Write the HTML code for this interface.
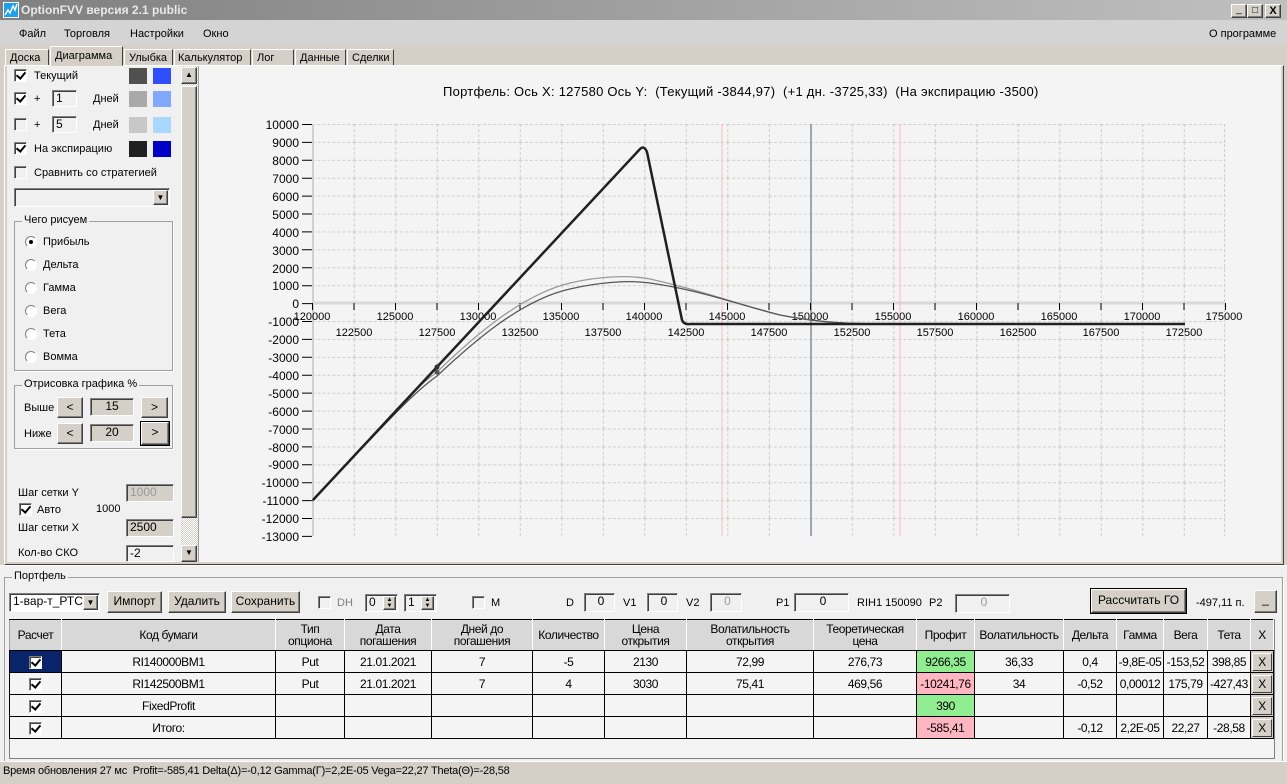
<!DOCTYPE html>
<html><head><meta charset="utf-8"><style>
*{box-sizing:border-box;margin:0;padding:0}
body{width:1287px;height:784px;overflow:hidden;background:#d4d0c8;font-family:"Liberation Sans",sans-serif;font-size:11px;color:#000;position:relative}
.a{position:absolute;white-space:nowrap}
.cb{position:absolute;width:13px;height:13px;background:#fff;border:1px solid;border-color:#808080 #fff #fff #808080;box-shadow:inset 1px 1px 0 #404040}
.cb.on::after{content:"";position:absolute;left:3px;top:0px;width:4px;height:7px;border:solid #000;border-width:0 2px 2px 0;transform:rotate(40deg)}
.cb.g{background:#f0f0f0}
.sunk{position:absolute;background:#f0f0f0;border:1px solid;border-color:#808080 #fff #fff #808080;box-shadow:inset 1px 1px 0 #404040;padding-left:3px;font-size:12px;line-height:15px}
.btn{position:absolute;background:#d4d0c8;border:1px solid;border-color:#fff #404040 #404040 #fff;box-shadow:inset -1px -1px 0 #808080;text-align:center;font-size:12px}
.sw{position:absolute;width:18px;height:16px}
.rad{position:absolute;width:12px;height:12px;border-radius:50%;background:#fff;border:1px solid;border-color:#808080 #fff #fff #808080}
.grp{position:absolute;border:1px solid #a0a0a0;box-shadow:1px 1px 0 #fff}
.grp>span{position:absolute;top:-8px;left:7px;background:#f0f0f0;padding:0 2px;font-size:11px}
.tab{position:absolute;top:49px;height:17px;background:#d4d0c8;border:1px solid;border-color:#fff #404040 transparent #fff;font-size:11px;padding:2px 4px 0}
table{border-collapse:collapse;position:absolute;left:9px;top:619px;table-layout:fixed;font-size:12px;letter-spacing:-0.4px}
td{border:1px solid #000;text-align:center;height:22px;padding:0;background:#f4f4f4;white-space:nowrap;overflow:hidden}
tr.h td{height:31px;background:#d8d8d8;border-color:#000 #fff #000 #a0a0a0;line-height:12px;font-size:12px}
.x{background:#d4d0c8!important;border-color:#000 #000 #000 #000}
.x div{margin:1px;border:1px solid;border-color:#fff #404040 #404040 #fff;height:18px;line-height:16px}
</style></head><body>
<!-- title bar -->
<div class="a" style="left:0;top:0;width:1287px;height:20px;background:linear-gradient(90deg,#808080,#c0c0c0)"></div>
<div class="a" style="left:3px;top:2px;width:16px;height:16px;background:#1b9ff0;border:1px solid #fff"></div>
<svg class="a" style="left:3px;top:2px" width="16" height="16"><path d="M2 13 L5 8 L7 11 L10 4 L12 8 L14 2" stroke="#fff" stroke-width="1.5" fill="none"/></svg>
<div class="a" style="left:21px;top:3px;color:#e8e8e8;font-weight:bold;font-size:12px">OptionFVV версия 2.1 public</div>
<div class="btn" style="left:1231px;top:4px;width:16px;height:14px;font-size:10px;line-height:10px">_</div>
<div class="btn" style="left:1247px;top:4px;width:16px;height:14px;font-size:10px;line-height:11px">□</div>
<div class="btn" style="left:1265px;top:4px;width:16px;height:14px;font-size:11px;line-height:12px;font-weight:bold">X</div>
<!-- menu -->
<div class="a" style="left:0;top:20px;width:1287px;height:25px;background:#d4d4d4"></div>
<div class="a" style="left:19px;top:28px">Файл</div>
<div class="a" style="left:64px;top:28px">Торговля</div>
<div class="a" style="left:130px;top:28px">Настройки</div>
<div class="a" style="left:203px;top:28px">Окно</div>
<div class="a" style="left:1209px;top:28px">О программе</div>
<!-- tabs -->
<div class="tab" style="left:5px;width:44px">Доска</div>
<div class="tab" style="left:50px;top:46px;height:20px;width:73px;z-index:2;padding-top:3px">Диаграмма</div>
<div class="tab" style="left:124px;width:49px">Улыбка</div>
<div class="tab" style="left:174px;width:77px;padding-left:3px">Калькулятор</div>
<div class="tab" style="left:252px;width:42px">Лог</div>
<div class="tab" style="left:295px;width:51px">Данные</div>
<div class="tab" style="left:347px;width:47px">Сделки</div>
<!-- main panel -->
<div class="a" style="left:4px;top:65px;width:1280px;height:500px;border:1px solid;border-color:#fff #404040 #404040 #fff;background:#d4d0c8"></div>
<div class="a" style="left:7px;top:66px;width:174px;height:496px;background:#f0f0f0"></div>
<div class="a" style="left:198px;top:66px;width:1083px;height:496px;background:#f4f4f4;border-left:1px solid #a0a0a0"></div>
<!-- left panel -->
<div class="cb on" style="left:14px;top:69px"></div><div class="a" style="left:34px;top:70px">Текущий</div>
<div class="sw" style="left:129px;top:68px;background:#505050"></div><div class="sw" style="left:153px;top:68px;background:#2d4fff"></div>
<div class="cb on" style="left:14px;top:92px"></div><div class="a" style="left:34px;top:93px">+</div>
<div class="sunk" style="left:52px;top:90px;width:25px;height:17px">1</div><div class="a" style="left:93px;top:93px">Дней</div>
<div class="sw" style="left:129px;top:91px;background:#a9a9a9"></div><div class="sw" style="left:153px;top:91px;background:#80a8ff"></div>
<div class="cb g" style="left:14px;top:118px"></div><div class="a" style="left:34px;top:119px">+</div>
<div class="sunk" style="left:52px;top:116px;width:25px;height:17px">5</div><div class="a" style="left:93px;top:119px">Дней</div>
<div class="sw" style="left:129px;top:117px;background:#c8c8c8"></div><div class="sw" style="left:153px;top:117px;background:#a8d8ff"></div>
<div class="cb on" style="left:14px;top:142px"></div><div class="a" style="left:34px;top:143px">На экспирацию</div>
<div class="sw" style="left:129px;top:141px;background:#202020"></div><div class="sw" style="left:153px;top:141px;background:#0000c8"></div>
<div class="cb g" style="left:14px;top:166px"></div><div class="a" style="left:34px;top:167px">Сравнить со стратегией</div>
<div class="sunk" style="left:14px;top:188px;width:156px;height:19px"></div>
<div class="btn" style="left:153px;top:190px;width:15px;height:15px;font-size:8px;line-height:13px">▼</div>
<div class="grp" style="left:14px;top:221px;width:159px;height:150px"><span>Чего рисуем</span></div>
<div class="rad" style="left:25px;top:236px"><div style="position:absolute;left:3px;top:3px;width:4px;height:4px;background:#000;border-radius:50%"></div></div><div class="a" style="left:43px;top:236px">Прибыль</div>
<div class="rad" style="left:25px;top:259px"></div><div class="a" style="left:43px;top:259px">Дельта</div>
<div class="rad" style="left:25px;top:282px"></div><div class="a" style="left:43px;top:282px">Гамма</div>
<div class="rad" style="left:25px;top:305px"></div><div class="a" style="left:43px;top:305px">Вега</div>
<div class="rad" style="left:25px;top:328px"></div><div class="a" style="left:43px;top:328px">Тета</div>
<div class="rad" style="left:25px;top:351px"></div><div class="a" style="left:43px;top:351px">Вомма</div>
<div class="grp" style="left:14px;top:385px;width:159px;height:64px"><span>Отрисовка графика %</span></div>
<div class="a" style="left:24px;top:402px">Выше</div>
<div class="btn" style="left:57px;top:397px;width:26px;height:21px;line-height:18px">&lt;</div>
<div class="sunk" style="left:90px;top:398px;width:44px;height:18px;background:#d4d0c8;text-align:center;padding:0">15</div>
<div class="btn" style="left:141px;top:397px;width:27px;height:21px;line-height:18px">&gt;</div>
<div class="a" style="left:24px;top:428px">Ниже</div>
<div class="btn" style="left:57px;top:423px;width:26px;height:21px;line-height:18px">&lt;</div>
<div class="sunk" style="left:90px;top:424px;width:44px;height:18px;background:#d4d0c8;text-align:center;padding:0">20</div>
<div class="btn" style="left:141px;top:422px;width:28px;height:23px;line-height:19px;outline:1px solid #000">&gt;</div>
<div class="a" style="left:18px;top:487px">Шаг сетки Y</div>
<div class="sunk" style="left:126px;top:484px;width:48px;height:18px;background:#d4d0c8;color:#999">1000</div>
<div class="cb on" style="left:19px;top:503px"></div><div class="a" style="left:37px;top:504px">Авто</div><div class="a" style="left:96px;top:503px">1000</div>
<div class="a" style="left:18px;top:522px">Шаг сетки X</div>
<div class="sunk" style="left:126px;top:519px;width:48px;height:18px;background:#d4d0c8">2500</div>
<div class="a" style="left:18px;top:547px">Кол-во СКО</div>
<div class="sunk" style="left:126px;top:545px;width:48px;height:17px">-2</div>
<!-- scrollbar -->
<div class="a" style="left:181px;top:66px;width:17px;height:496px;background:repeating-conic-gradient(#fff 0 25%,#d4d0c8 0 50%) 0 0/2px 2px"></div>
<div class="btn" style="left:181px;top:67px;width:16px;height:17px;font-size:8px;line-height:14px">▲</div>
<div class="btn" style="left:181px;top:86px;width:16px;height:432px"></div>
<div class="btn" style="left:181px;top:545px;width:16px;height:17px;font-size:8px;line-height:14px">▼</div>
<!-- chart -->
<div class="a" style="left:443px;top:84px;font-size:13px;letter-spacing:0.25px">Портфель: Ось X: 127580 Ось Y: &nbsp;(Текущий -3844,97) &nbsp;(+1 дн. -3725,33) &nbsp;(На экспирацию -3500)</div>
<svg class="a" style="left:0;top:0" width="1287" height="565">
<defs><pattern id="g" patternUnits="userSpaceOnUse" x="312.3" y="124" width="41.5" height="17.913"><path d="M0.5 0V17.913M0 0.5H41.5" stroke="#cfcfcf" stroke-width="1" stroke-dasharray="3 2" fill="none"/></pattern></defs>
<rect x="312.3" y="124" width="913" height="412" fill="url(#g)"/>
<line x1="1224.5" y1="124" x2="1224.5" y2="536" stroke="#cfcfcf" stroke-dasharray="3 2"/>
<line x1="313" y1="124" x2="313" y2="536" stroke="#d0d0d0" stroke-width="2"/>
<line x1="312" y1="303" x2="1225" y2="303" stroke="#d8d8d8" stroke-width="3"/>
<line x1="722" y1="124" x2="722" y2="536" stroke="#ffb8c0"/>
<line x1="900" y1="124" x2="900" y2="536" stroke="#ffb8c0"/>
<line x1="811" y1="124" x2="811" y2="536" stroke="#a0a4ac" stroke-width="2"/>
<g stroke="#000"><path d="M302 124.5h10M302 142.4h10M302 160.3h10M302 178.2h10M302 196.1h10M302 214h10M302 231.9h10M302 249.8h10M302 267.8h10M302 285.7h10M302 303.6h10M302 321.5h10M302 339.4h10M302 357.3h10M302 375.2h10M302 393.1h10M302 411.1h10M302 429h10M302 446.9h10M302 464.8h10M302 482.7h10M302 500.6h10M302 518.5h10M302 536.4h10"/>
<path d="M312.5 303v7M354 303v7M395.5 303v7M437 303v7M478.5 303v7M520 303v7M561.5 303v7M603 303v7M644.5 303v7M686 303v7M727.5 303v7M769 303v7M810.5 303v7M852 303v7M893.5 303v7M935 303v7M976.5 303v7M1018 303v7M1059.5 303v7M1101 303v7M1142.5 303v7M1184 303v7M1225.5 303v7"/></g>
<g font-family="Liberation Sans" font-size="12" text-anchor="end">
<text x="299" y="129">10000</text><text x="299" y="147">9000</text><text x="299" y="165">8000</text><text x="299" y="183">7000</text><text x="299" y="201">6000</text><text x="299" y="219">5000</text><text x="299" y="237">4000</text><text x="299" y="255">3000</text><text x="299" y="273">2000</text><text x="299" y="290">1000</text><text x="299" y="308">0</text><text x="299" y="326">-1000</text><text x="299" y="344">-2000</text><text x="299" y="362">-3000</text><text x="299" y="380">-4000</text><text x="299" y="398">-5000</text><text x="299" y="416">-6000</text><text x="299" y="434">-7000</text><text x="299" y="452">-8000</text><text x="299" y="469">-9000</text><text x="299" y="487">-10000</text><text x="299" y="505">-11000</text><text x="299" y="523">-12000</text><text x="299" y="541">-13000</text></g>
<g font-family="Liberation Sans" font-size="11" text-anchor="middle">
<text x="312" y="320">120000</text><text x="395" y="320">125000</text><text x="478" y="320">130000</text><text x="561" y="320">135000</text><text x="644" y="320">140000</text><text x="727" y="320">145000</text><text x="810" y="320">150000</text><text x="893" y="320">155000</text><text x="976" y="320">160000</text><text x="1059" y="320">165000</text><text x="1142" y="320">170000</text><text x="1224" y="320">175000</text>
<text x="354" y="336">122500</text><text x="437" y="336">127500</text><text x="520" y="336">132500</text><text x="603" y="336">137500</text><text x="686" y="336">142500</text><text x="769" y="336">147500</text><text x="852" y="336">152500</text><text x="935" y="336">157500</text><text x="1018" y="336">162500</text><text x="1101" y="336">167500</text><text x="1184" y="336">172500</text></g>
<path d="M312 501 C380 430 405 395 437 372 C470 340 520 295 570 283 C600 276 630 275 650 279 C700 290 740 305 780 315 C820 323 850 324 900 324" stroke="#999" stroke-width="1.3" fill="none"/>
<path d="M312 501 C380 430 410 395 437 376 C470 345 520 300 570 289 C600 282 630 280 650 283 C700 290 740 305 780 315 C820 323 850 324 900 324" stroke="#555" stroke-width="1.3" fill="none"/>
<path d="M313 500 L640 149 Q644 145 647 152 L682 320 Q684 325 690 324 L1185 324" stroke="#202020" stroke-width="2.5" fill="none" stroke-linejoin="round"/>
<circle cx="437" cy="367" r="2.5" fill="#333"/><circle cx="437" cy="372" r="2.5" fill="#555"/>
</svg>
<!-- bottom area -->
<div class="a" style="left:0;top:565px;width:1287px;height:196px;background:#f0f0f0;border-top:1px solid #fff"></div>
<div class="grp" style="left:4px;top:577px;width:1279px;height:190px;border-bottom:none"><span>Портфель</span></div>
<div class="sunk" style="left:9px;top:593px;width:91px;height:19px;background:#fff;font-size:12px">1-вар-т_РТС</div>
<div class="btn" style="left:83px;top:595px;width:15px;height:15px;font-size:8px;line-height:13px">▼</div>
<div class="btn" style="left:107px;top:591px;width:55px;height:22px;line-height:19px">Импорт</div>
<div class="btn" style="left:168px;top:591px;width:58px;height:22px;line-height:19px">Удалить</div>
<div class="btn" style="left:231px;top:591px;width:69px;height:22px;line-height:19px">Сохранить</div>
<div class="cb g" style="left:318px;top:596px"></div><div class="a" style="left:337px;top:597px;color:#808080">DH</div>
<div class="sunk" style="left:365px;top:594px;width:33px;height:18px">0</div><div class="btn" style="left:383px;top:596px;width:13px;height:14px;font-size:6px;line-height:6px">▲<br>▼</div>
<div class="sunk" style="left:404px;top:594px;width:33px;height:18px">1</div><div class="btn" style="left:421px;top:596px;width:13px;height:14px;font-size:6px;line-height:6px">▲<br>▼</div>
<div class="cb g" style="left:472px;top:596px"></div><div class="a" style="left:491px;top:597px">M</div>
<div class="a" style="left:566px;top:597px">D</div><div class="sunk" style="left:584px;top:593px;width:31px;height:19px;text-align:center">0</div>
<div class="a" style="left:623px;top:597px">V1</div><div class="sunk" style="left:647px;top:593px;width:31px;height:19px;text-align:center">0</div>
<div class="a" style="left:686px;top:597px">V2</div><div class="sunk" style="left:710px;top:593px;width:32px;height:19px;text-align:center;color:#999">0</div>
<div class="a" style="left:776px;top:597px">P1</div><div class="sunk" style="left:794px;top:593px;width:55px;height:19px;text-align:center">0</div>
<div class="a" style="left:857px;top:597px">RIH1 150090</div><div class="a" style="left:929px;top:597px">P2</div>
<div class="sunk" style="left:955px;top:594px;width:55px;height:19px;text-align:center;color:#999">0</div>
<div class="btn" style="left:1091px;top:589px;width:95px;height:24px;line-height:20px;outline:1px solid #000">Рассчитать ГО</div>
<div class="a" style="left:1196px;top:597px">-497,11 п.</div>
<div class="btn" style="left:1254px;top:590px;width:23px;height:23px;line-height:17px">_</div>
<div class="a" style="left:9px;top:619px;width:1266px;height:140px;background:#f4f4f4;border:1px solid #808080"></div>
<table>
<colgroup><col style="width:52px"><col style="width:214px"><col style="width:69px"><col style="width:87px"><col style="width:101px"><col style="width:72px"><col style="width:82px"><col style="width:127px"><col style="width:103px"><col style="width:58px"><col style="width:89px"><col style="width:53px"><col style="width:47px"><col style="width:44px"><col style="width:43px"><col style="width:23px"></colgroup>
<tr class="h"><td>Расчет</td><td>Код бумаги</td><td>Тип<br>опциона</td><td>Дата<br>погашения</td><td>Дней до<br>погашения</td><td>Количество</td><td>Цена<br>открытия</td><td>Волатильность<br>открытия</td><td>Теоретическая<br>цена</td><td>Профит</td><td>Волатильность</td><td>Дельта</td><td>Гамма</td><td>Вега</td><td>Тета</td><td>X</td></tr>
<tr><td style="background:#0a246a"><div class="cb on" style="position:relative;display:inline-block;vertical-align:middle"></div></td><td>RI140000BM1</td><td>Put</td><td>21.01.2021</td><td>7</td><td>-5</td><td>2130</td><td>72,99</td><td>276,73</td><td style="background:#90ee90">9266,35</td><td>36,33</td><td>0,4</td><td>-9,8E-05</td><td>-153,52</td><td>398,85</td><td class="x"><div>X</div></td></tr>
<tr><td><div class="cb on" style="position:relative;display:inline-block;vertical-align:middle"></div></td><td>RI142500BM1</td><td>Put</td><td>21.01.2021</td><td>7</td><td>4</td><td>3030</td><td>75,41</td><td>469,56</td><td style="background:#ffb6c1">-10241,76</td><td>34</td><td>-0,52</td><td>0,00012</td><td>175,79</td><td>-427,43</td><td class="x"><div>X</div></td></tr>
<tr><td><div class="cb on" style="position:relative;display:inline-block;vertical-align:middle"></div></td><td>FixedProfit</td><td></td><td></td><td></td><td></td><td></td><td></td><td></td><td style="background:#90ee90">390</td><td></td><td></td><td></td><td></td><td></td><td class="x"><div>X</div></td></tr>
<tr><td><div class="cb on" style="position:relative;display:inline-block;vertical-align:middle"></div></td><td>Итого:</td><td></td><td></td><td></td><td></td><td></td><td></td><td></td><td style="background:#ffb6c1">-585,41</td><td></td><td>-0,12</td><td>2,2E-05</td><td>22,27</td><td>-28,58</td><td class="x"><div>X</div></td></tr>
</table>
<!-- status -->
<div class="a" style="left:0;top:761px;width:1287px;height:23px;background:#d4d0c8;border-top:1px solid #fff"></div>
<div class="a" style="left:3px;top:765px;font-size:11px;letter-spacing:-0.2px">Время обновления 27 мс &nbsp;Profit=-585,41 Delta(Δ)=-0,12 Gamma(Γ)=2,2E-05 Vega=22,27 Theta(Θ)=-28,58</div>
</body></html>
